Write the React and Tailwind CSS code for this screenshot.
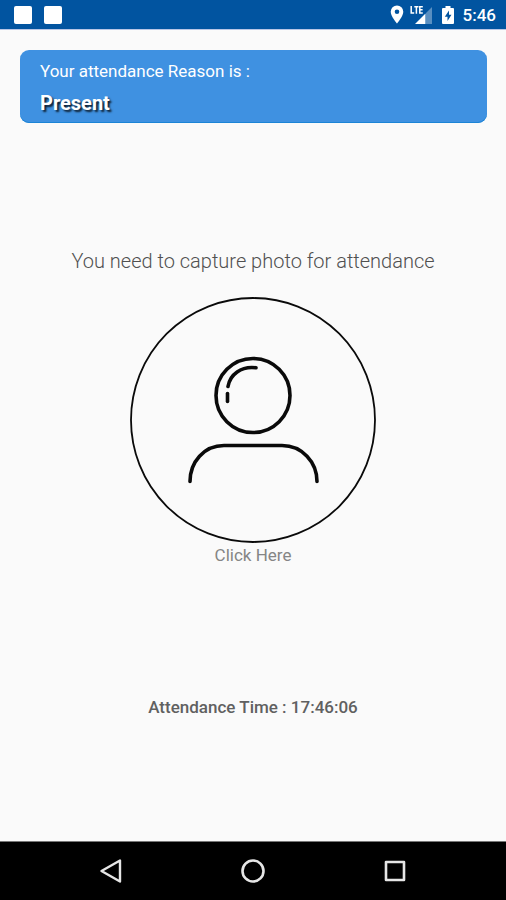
import React, { useState } from 'react';

const StatusBar = () => (
  <header className="flex h-[30px] shrink-0 items-center justify-between border-b border-[#b9c6e6] bg-[#0154a0] pr-[10px] pl-[14px]">
    <div className="flex gap-3">
      <span className="size-[18px] rounded-xs bg-white" />
      <span className="size-[18px] rounded-xs bg-white" />
    </div>

    <div className="flex items-center text-white">
      {/* location */}
      <svg width="14" height="19" viewBox="0 0 14 19" fill="currentColor" aria-hidden="true">
        <path
          fillRule="evenodd"
          d="M7 .5A6.3 6.3 0 0 0 .7 6.8C.7 11.500 7 18.500 7 18.500s6.300-7 6.300-11.700A6.300 6.300 0 0 0 7 .5Zm0 8.600a2.300 2.300 0 1 1 0-4.600 2.300 2.300 0 0 1 0 4.600Z"
        />
      </svg>
      {/* mobile signal */}
      <svg className="ml-[6px]" width="22" height="20" viewBox="0 0 22 20" fill="currentColor" aria-hidden="true">
        <path d="M22 2v17h-6V8Z" opacity="0.35" />
        <path d="M15.500 8.500V19H5Z" />
        <path
          d="M1.200 1v7h3M4.300 1.700h4.200M6.400 1.500V8.700M12.800 1.700H9.800v6.300H12.800M10 4.800h2.600"
          fill="none"
          stroke="currentColor"
          strokeWidth="1.500"
        />
      </svg>
      {/* battery */}
      <svg className="ml-[10px]" width="12" height="18" viewBox="0 0 12 18" aria-hidden="true">
        <path d="M3.500 0h5v2H11a1 1 0 0 1 1 1v14a1 1 0 0 1-1 1H1a1 1 0 0 1-1-1V3a1 1 0 0 1 1-1h2.500Z" fill="currentColor" />
        <path d="M7 4.500 2.800 10.800h2.700v4.200l4-6.300H7Z" fill="#0154a0" />
      </svg>
      <span className="ml-[9px] text-[17px] leading-6 font-medium">5:46</span>
    </div>
  </header>
);

const ReasonCard = ({ reason }) => (
  <section className="mt-5 mr-[19px] ml-5 flex flex-col gap-2 rounded-[9px] bg-[#3f91e1] px-5 pt-[9px] pb-2 text-white shadow-[inset_0_-1px_0_#1c84d6]">
    <p className="text-[17px] leading-6">Your attendance Reason is :</p>
    <p className="text-[20px] leading-6 font-bold [text-shadow:2px_2px_2px_#000000cc]">{reason}</p>
  </section>
);

const PersonIcon = () => (
  <svg
    className="size-[246px]"
    viewBox="0 0 246 246"
    fill="none"
    stroke="#0a0a0a"
    strokeWidth="3.600"
    strokeLinecap="round"
    aria-hidden="true"
  >
    <circle cx="123" cy="123" r="122" strokeWidth="1.800" />
    <circle cx="123" cy="98.500" r="37" />
    <path d="M126 70.800C111 69 100 77.500 98 89.500" />
    <path d="M97.500 96.500v8" />
    <path d="M60 184.500C60 165 74 148.500 94 148.500h58c20 0 35 16.500 35 36" />
  </svg>
);

const NavigationBar = () => (
  <nav className="flex h-[59px] shrink-0 justify-center gap-[118px] border-t border-[#777] bg-black text-[#e6e6e6]">
    <button type="button" aria-label="Back" className="flex w-6 items-center">
      <svg width="24" height="24" viewBox="0 0 24 24" fill="none" stroke="currentColor" strokeWidth="2.400" strokeLinejoin="round">
        <path d="M21 1.500v21L2.500 12Z" />
      </svg>
    </button>
    <button type="button" aria-label="Home" className="flex w-6 items-center">
      <svg width="24" height="24" viewBox="0 0 24 24" fill="none" stroke="currentColor" strokeWidth="2.600">
        <circle cx="12" cy="12" r="10.500" />
      </svg>
    </button>
    <button type="button" aria-label="Recent apps" className="flex w-6 items-center">
      <svg width="24" height="24" viewBox="0 0 24 24" fill="none" stroke="currentColor" strokeWidth="2.600" strokeLinejoin="round">
        <path d="M3 3h18v18H3Z" />
      </svg>
    </button>
  </nav>
);

const App = () => {
  const [time, setTime] = useState('17:46:06');

  const handleCapture = () => {
    setTime(new Date().toLocaleTimeString('en-GB'));
  };

  return (
    <div className="flex min-h-screen flex-col bg-[#fafafa] font-['Roboto',sans-serif]">
      <StatusBar />
      <ReasonCard reason="Present" />

      <main className="flex flex-1 flex-col items-center justify-evenly gap-1.5 pt-1 text-center">
        <div className="flex flex-col items-center">
          <p className="mb-6 text-[20px] leading-6 font-light text-[#505050]">
            You need to capture photo for attendance
          </p>
          <button type="button" onClick={handleCapture} className="flex cursor-pointer flex-col items-center">
            <PersonIcon />
            <span className="text-[17px] leading-6 text-[#858585]">Click Here</span>
          </button>
        </div>

        <p className="text-[17px] leading-6 font-medium text-[#606060]">Attendance Time : {time}</p>
      </main>

      <NavigationBar />
    </div>
  );
};

export default App;
